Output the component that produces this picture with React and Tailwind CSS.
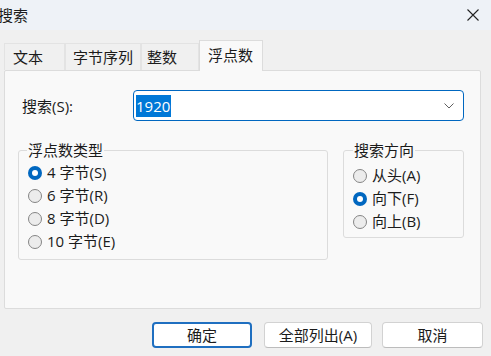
import React from 'react';

const Radio = ({ checked, label }) => (
  <div className="flex items-center h-[23px]">
    {checked ? (
      <span className="w-[14px] h-[14px] rounded-full bg-[#0067c0] flex items-center justify-center">
        <span className="w-[6px] h-[6px] rounded-full bg-white" />
      </span>
    ) : (
      <span className="w-[14px] h-[14px] rounded-full border border-[#858585] bg-[#ececec]" />
    )}
    <span className="ml-[5px]">{label}</span>
  </div>
);

const tabs = [
  { label: '文本', cls: 'w-[61px] pl-[8px]' },
  { label: '字节序列', cls: 'w-[76px] pl-[7px]' },
  { label: '整数', cls: 'w-[58px] pl-[5px]' },
];

export default function App() {
  return (
    <div className="w-[491px] h-[356px] overflow-hidden flex flex-col bg-[#f0f0f0] text-[15px] text-[#1b1b1b] font-['Open_Sans','Noto_Sans_CJK_SC',sans-serif]">
      <div className="h-[30px] bg-[#eef2f7] flex items-center justify-between pr-[12px]">
        <span className="-ml-[2px] leading-[20px]">搜索</span>
        <svg width="12" height="12" viewBox="0 0 12 12" stroke="#222" strokeWidth="1.1">
          <path d="M0.5 0.5 L11.5 11.5 M11.5 0.5 L0.5 11.5" />
        </svg>
      </div>

      <div className="pl-[4px] pt-[10px]">
        <div className="flex items-end h-[30px]">
          {tabs.map((t) => (
            <div
              key={t.label}
              className={`${t.cls} h-[27px] flex items-center border border-b-0 border-[#e3e3e3] bg-[#f0f0f0] leading-[20px]`}
            >
              {t.label}
            </div>
          ))}
          <div className="w-[64px] h-[31px] -mb-px relative z-10 flex items-center pl-[8px] pb-[3px] border border-b-0 border-[#dcdcdc] bg-[#f9f9f9] leading-[20px]">
            浮点数
          </div>
        </div>

        <div className="w-[477px] h-[239px] border border-[#dcdcdc] bg-[#f9f9f9] rounded-[2px]">
          <div className="flex items-center mt-[19px] pl-[17px]">
            <span className="w-[111px] leading-[20px]">搜索(S):</span>
            <div className="w-[331px] h-[31px] border border-[#0067c0] rounded-[4px] bg-white flex items-center pl-[2px] pr-[9px]">
              <span className="bg-[#0078d7] text-white leading-[22px] h-[22px] pr-px">1920</span>
              <span className="flex-1" />
              <svg width="10" height="6" viewBox="0 0 10 6" fill="none" stroke="#5f5f5f" strokeWidth="1">
                <path d="M0.5 0.5 L5 5 L9.5 0.5" />
              </svg>
            </div>
          </div>

          <div className="flex items-start mt-[19px] pl-[13px]">
            <fieldset className="w-[310px] h-[120px] border border-[#dcdcdc] rounded-[3px] pl-[9px] pt-[1px]">
              <legend className="-ml-[1px] px-[1px] leading-[20px]">浮点数类型</legend>
              <Radio checked label="4 字节(S)" />
              <Radio label="6 字节(R)" />
              <Radio label="8 字节(D)" />
              <Radio label="10 字节(E)" />
            </fieldset>
            <fieldset className="w-[121px] h-[98px] ml-[15px] border border-[#dcdcdc] rounded-[3px] pl-[9px] pt-[4px]">
              <legend className="px-[1px] leading-[20px]">搜索方向</legend>
              <Radio label="从头(A)" />
              <Radio checked label="向下(F)" />
              <Radio label="向上(B)" />
            </fieldset>
          </div>
        </div>
      </div>

      <div className="flex justify-end pr-[8px] mt-[13px]">
        <button className="w-[100px] h-[26px] rounded-[4px] border-2 border-[#1f6fc0] bg-white leading-[20px]">确定</button>
        <button className="w-[108px] h-[26px] ml-[12px] rounded-[4px] border border-[#d2d2d2] border-b-[#bcbcbc] bg-white leading-[20px]">全部列出(A)</button>
        <button className="w-[101px] h-[26px] ml-[10px] rounded-[4px] border border-[#d2d2d2] border-b-[#bcbcbc] bg-white leading-[20px]">取消</button>
      </div>
    </div>
  );
}
